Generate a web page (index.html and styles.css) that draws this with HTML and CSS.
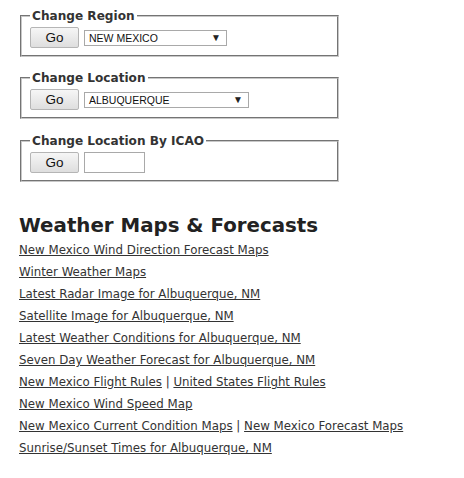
FILE: index.html
```html
<!DOCTYPE html>
<html>
<head>
<meta charset="utf-8">
<link rel="stylesheet" href="styles.css">
</head>
<body>
<div class="page">
  <form class="box box-region">
    <fieldset class="group">
      <legend class="legend">Change Region</legend>
      <div class="row">
        <button type="button" class="go">Go</button>
        <div class="select sel-region"><span>NEW MEXICO</span><span class="arrow">▼</span></div>
      </div>
    </fieldset>
  </form>
  <form class="box box-loc">
    <fieldset class="group">
      <legend class="legend">Change Location</legend>
      <div class="row">
        <button type="button" class="go">Go</button>
        <div class="select sel-loc"><span>ALBUQUERQUE</span><span class="arrow">▼</span></div>
      </div>
    </fieldset>
  </form>
  <form class="box box-icao">
    <fieldset class="group">
      <legend class="legend">Change Location By ICAO</legend>
      <div class="row">
        <button type="button" class="go">Go</button>
        <div class="textbox"></div>
      </div>
    </fieldset>
  </form>

  <h2 class="title">Weather Maps &amp; Forecasts</h2>
  <ul class="links">
    <li><a href="#">New Mexico Wind Direction Forecast Maps</a></li>
    <li><a href="#">Winter Weather Maps</a></li>
    <li><a href="#">Latest Radar Image for Albuquerque, NM</a></li>
    <li><a href="#">Satellite Image for Albuquerque, NM</a></li>
    <li><a href="#">Latest Weather Conditions for Albuquerque, NM</a></li>
    <li><a href="#">Seven Day Weather Forecast for Albuquerque, NM</a></li>
    <li><a href="#">New Mexico Flight Rules</a> | <a href="#">United States Flight Rules</a></li>
    <li><a href="#">New Mexico Wind Speed Map</a></li>
    <li><a href="#">New Mexico Current Condition Maps</a> | <a href="#">New Mexico Forecast Maps</a></li>
    <li><a href="#">Sunrise/Sunset Times for Albuquerque, NM</a></li>
  </ul>
</div>
</body>
</html>
```

FILE: styles.css
```css
html, body {
  margin: 0;
  padding: 0;
  background: #fff;
}
body {
  font-family: "DejaVu Sans", Verdana, sans-serif;
  color: #333;
}
.page {
  padding: 9px 0 0 19px;
}
.box {
  margin: 0;
  width: 320px;
}
.box-region { margin-bottom: 14px; }
.box-loc { margin-bottom: 15px; }
.group {
  margin: 0 0 0 1px;
  padding: 4px 8px 7px 8px;
  border: 2px groove #c8c8c8;
}
.legend {
  padding: 0 2px;
  font-weight: bold;
  font-size: 12.1px;
  color: #333;
}
.row {
  display: flex;
  align-items: center;
  gap: 5px;
}
.go {
  width: 49px;
  height: 21px;
  padding: 0;
  font-family: "Liberation Sans", Arial, sans-serif;
  font-size: 13.5px;
  color: #111;
  border: 1px solid #b5b5b5;
  border-radius: 2px;
  background: linear-gradient(#f6f6f6, #dedede);
}
.select {
  height: 16px;
  box-sizing: border-box;
  border: 1px solid #a9a9a9;
  display: flex;
  align-items: center;
  justify-content: space-between;
  padding: 0 5px 0 4px;
  font-family: "Liberation Sans", Arial, sans-serif;
  font-size: 10.5px;
  color: #111;
  background: #fff;
}
.sel-region { width: 143px; }
.sel-loc { width: 165px; }
.arrow {
  font-size: 10px;
  color: #222;
}
.textbox {
  width: 61px;
  height: 21px;
  box-sizing: border-box;
  border: 1px solid #a9a9a9;
  background: #fff;
}
.title {
  margin: 32px 0 1px 0;
  font-size: 19.8px;
  font-weight: bold;
  color: #222;
  line-height: 24px;
}
.links {
  list-style: none;
  margin: 0;
  padding: 0;
  font-size: 11.8px;
  line-height: 22px;
  color: #333;
}
.links a {
  color: #333;
  text-decoration: underline;
}
```
